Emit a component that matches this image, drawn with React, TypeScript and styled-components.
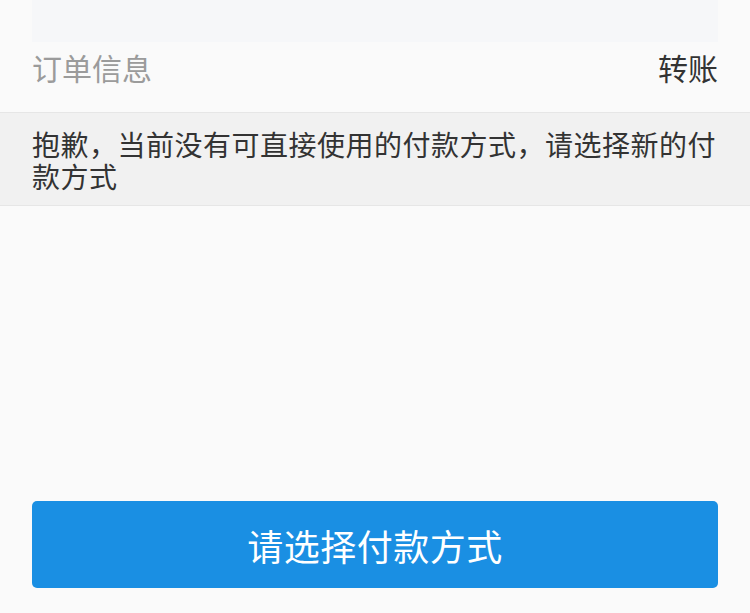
import styled, { createGlobalStyle } from 'styled-components';

const GlobalStyle = createGlobalStyle`
  html, body {
    margin: 0;
    padding: 0;
    background: #fafafa;
  }
  body {
    font-family: "Noto Sans CJK SC", "Noto Sans", sans-serif;
  }
`;

const Page = styled.div`
  height: 100vh;
  display: flex;
  flex-direction: column;
  background: #fafafa;
  overflow: hidden;
`;

const TopCard = styled.div`
  height: 42px;
  margin: 0 32px;
  background: #f6f7f9;
`;

const InfoRow = styled.div`
  height: 70px;
  padding: 10px 32px 0;
  box-sizing: border-box;
  display: flex;
  justify-content: space-between;
  align-items: flex-start;
  font-size: 30px;
  line-height: 30px;
`;

const Label = styled.span<{ $muted?: boolean }>`
  color: ${(p) => (p.$muted ? '#9b9b9b' : '#333333')};
`;

const Notice = styled.div`
  background: #f1f1f1;
  border-top: 1px solid #e6e6e6;
  border-bottom: 1px solid #e6e6e6;
  padding: 15px 32px 13px;
  font-size: 28px;
  line-height: 32px;
  color: #333333;
  letter-spacing: 0.5px;
`;

const Spacer = styled.div`
  flex: 1;
`;

const Footer = styled.div`
  padding: 0 32px 25px;
`;

const PayButton = styled.button`
  width: 100%;
  height: 87px;
  border: none;
  border-radius: 5px;
  background: #1a8fe3;
  color: #ffffff;
  font-family: inherit;
  font-size: 36px;
  letter-spacing: 0.5px;
  cursor: pointer;
`;

export default function App() {
  return (
    <>
      <GlobalStyle />
      <Page>
        <TopCard />
        <InfoRow>
          <Label $muted>订单信息</Label>
          <Label>转账</Label>
        </InfoRow>
        <Notice>抱歉，当前没有可直接使用的付款方式，请选择新的付款方式</Notice>
        <Spacer />
        <Footer>
          <PayButton>请选择付款方式</PayButton>
        </Footer>
      </Page>
    </>
  );
}
